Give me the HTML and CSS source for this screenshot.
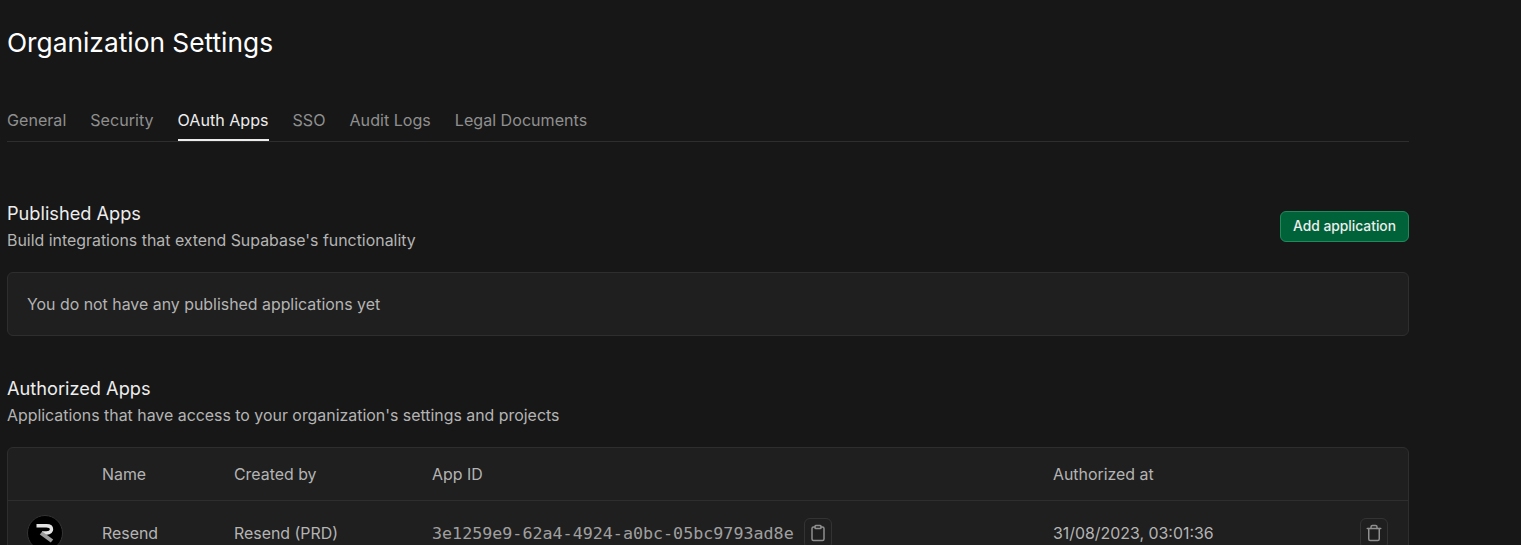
FILE: index.html
```html
<!DOCTYPE html>
<html>
<head>
    <meta charset="UTF-8">
    <meta name="viewport" content="width=device-width, initial-scale=1.0">
    <title>Organization Settings</title>
    <link rel="stylesheet" href="styles.css">
</head>
<body>
    <main class="page">
        <h1>Organization Settings</h1>
        <nav class="tabs">
            <a>General</a>
            <a>Security</a>
            <a class="active">OAuth Apps</a>
            <a>SSO</a>
            <a>Audit Logs</a>
            <a>Legal Documents</a>
        </nav>

        <section class="published">
            <div class="section-head">
                <div>
                    <h2>Published Apps</h2>
                    <p>Build integrations that extend Supabase's functionality</p>
                </div>
                <button class="btn-add">Add application</button>
            </div>
            <div class="card empty">You do not have any published applications yet</div>
        </section>

        <section class="authorized">
            <h2>Authorized Apps</h2>
            <p>Applications that have access to your organization's settings and projects</p>
            <div class="card table">
                <div class="row head">
                    <span></span>
                    <span>Name</span>
                    <span>Created by</span>
                    <span>App ID</span>
                    <span>Authorized at</span>
                    <span></span>
                </div>
                <div class="row">
                    <span class="logo">
                        <svg width="24" height="24" viewBox="0 0 24 24" fill="none">
                            <path d="M3.5 4.7h10c3.4 0 5 1.6 5 3.6s-1.8 3.5-5 3.7H9" stroke="#e4e4e4" stroke-width="3.4"/>
                            <path d="M8 12l11 8" stroke="#9a9a9a" stroke-width="4"/>
                        </svg>
                    </span>
                    <span>Resend</span>
                    <span>Resend (PRD)</span>
                    <span class="app-id">
                        <code>3e1259e9-62a4-4924-a0bc-05bc9793ad8e</code>
                        <button class="icon-btn">
                            <svg width="18" height="18" viewBox="0 0 24 24" fill="none" stroke="currentColor" stroke-width="2" stroke-linecap="round" stroke-linejoin="round">
                                <path d="M16 4h2a2 2 0 0 1 2 2v14a2 2 0 0 1-2 2H6a2 2 0 0 1-2-2V6a2 2 0 0 1 2-2h2"/>
                                <rect x="8" y="2" width="8" height="4" rx="1"/>
                            </svg>
                        </button>
                    </span>
                    <span>31/08/2023, 03:01:36</span>
                    <button class="icon-btn">
                        <svg width="18" height="18" viewBox="0 0 24 24" fill="none" stroke="currentColor" stroke-width="2" stroke-linecap="round" stroke-linejoin="round">
                            <path d="M3 6h18"/>
                            <path d="M19 6v14a2 2 0 0 1-2 2H7a2 2 0 0 1-2-2V6"/>
                            <path d="M8 6V4a2 2 0 0 1 2-2h4a2 2 0 0 1 2 2v2"/>
                        </svg>
                    </button>
                </div>
            </div>
        </section>
    </main>
</body>
</html>
```

FILE: styles.css
```css
html, body {
    height: 545px;
    overflow: hidden;
}
body {
    margin: 0;
    background: #171717;
    color: #ededed;
    font-family: Inter, "Liberation Sans", sans-serif;
    font-size: 15.9px;
}
.page {
    width: 1402px;
    margin-left: 7px;
}
h1 {
    margin: 0;
    padding-top: 25px;
    font-size: 26.3px;
    line-height: 36px;
    font-weight: 400;
    color: #fff;
}
.tabs {
    display: flex;
    gap: 24px;
    margin-top: 41px;
    border-bottom: 1px solid #2e2e2e;
    color: #8f8f8f;
    font-size: 16.1px;
}
.tabs a {
    height: 33px;
    padding-top: 6px;
    line-height: 24px;
}
.tabs a.active {
    color: #ededed;
    border-bottom: 2px solid #ededed;
    height: 31px;
}
h2 {
    margin: 0;
    font-size: 18.2px;
    line-height: 24px;
    font-weight: 400;
    color: #ededed;
}
section p {
    margin: 3px 0 0;
    line-height: 26px;
    color: #b4b4b4;
}
.published {
    margin-top: 59px;
}
.section-head {
    display: flex;
    justify-content: space-between;
    align-items: center;
}
.btn-add {
    background: #006239;
    color: #ededed;
    border: 1px solid #1f8a5c;
    border-radius: 6px;
    height: 31px;
    margin-bottom: 3px;
    padding: 0 12px;
    font-family: inherit;
    font-size: 13.8px;
    font-weight: 500;
}
.card {
    background: #1f1f1f;
    border: 1px solid #2e2e2e;
    border-radius: 6px;
}
.empty {
    margin-top: 18px;
    padding: 20px 19px 18px;
    line-height: 24px;
    color: #b4b4b4;
}
.authorized {
    margin-top: 40px;
}
.table {
    margin-top: 18px;
    color: #b4b4b4;
}
.row {
    display: grid;
    grid-template-columns: 94px 132px 198px 621px 307px 1fr;
    align-items: center;
    height: 64px;
}
.row.head {
    height: 52px;
    border-bottom: 1px solid #2e2e2e;
}
.logo {
    display: flex;
    align-items: center;
    justify-content: center;
    width: 36px;
    height: 36px;
    margin-left: 19px;
    background: #000;
    border: 1px solid #333;
    border-radius: 50%;
    box-sizing: border-box;
}
.app-id {
    display: flex;
    align-items: center;
    gap: 10px;
}
code {
    font-family: "DejaVu Sans Mono", monospace;
    font-size: 16.7px;
    color: #a0a0a0;
}
.icon-btn {
    display: flex;
    align-items: center;
    justify-content: center;
    width: 28px;
    height: 31px;
    padding: 0;
    background: transparent;
    border: 1px solid #333;
    border-radius: 6px;
    color: #8f8f8f;
}
```
